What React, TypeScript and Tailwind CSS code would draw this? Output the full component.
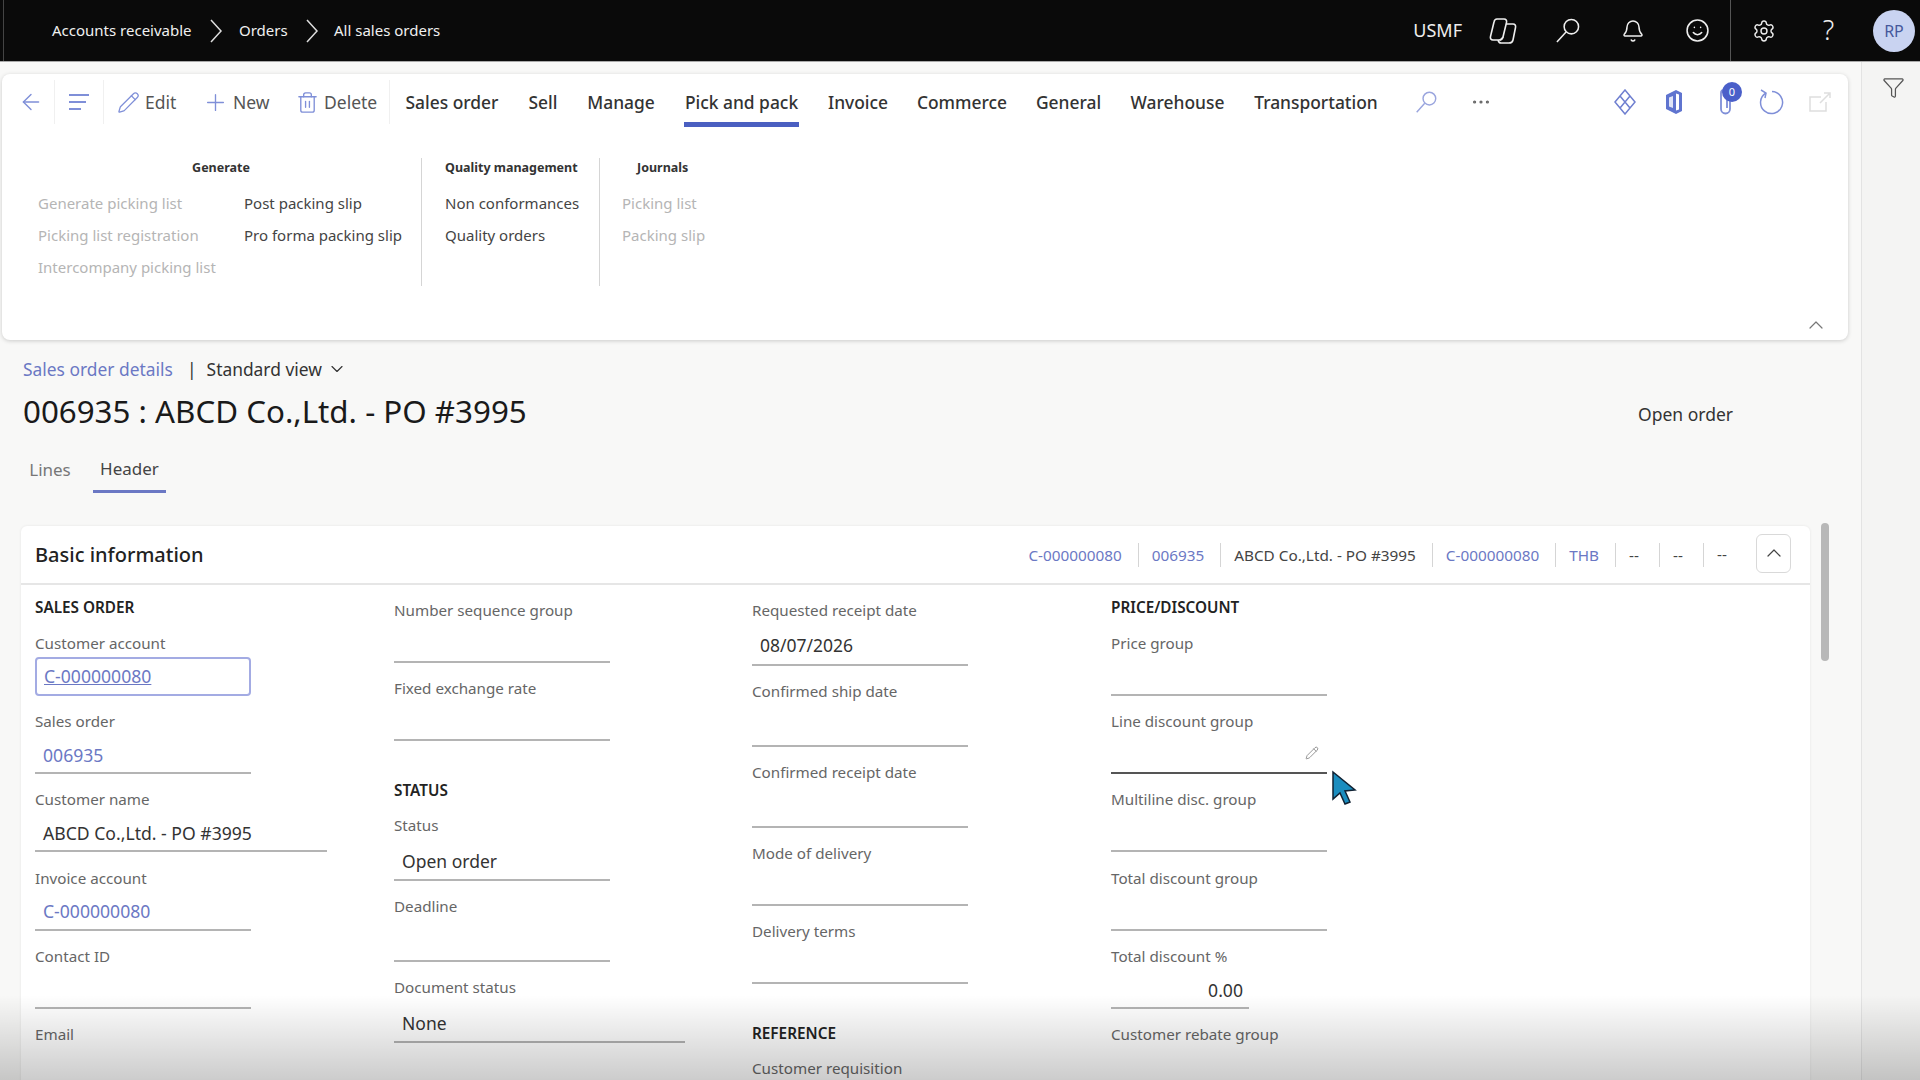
import { FC, ReactNode } from 'react';
import { ArrowLeft, Bell, ChevronDown, ChevronUp, Ellipsis, Funnel, Pencil, Plus, Settings, Smile, Trash2 } from 'lucide-react';

const font = "font-['Noto_Sans','Open_Sans',sans-serif]";

// ---- small drawn icons ----
const CopilotIcon = () => (
    <svg width="30" height="28" viewBox="0 0 30 28" fill="none" stroke="#eee" strokeWidth="1.600">
        <path d="M9 2h7c2 0 3 1.500 2.500 3.500L15 20c-.5 2-2 3-4 3H5c-2 0-3-1.500-2.500-3.500L6 5c.4-2 1.500-3 3-3z" />
        <path d="M18 7h7c2 0 3 1.500 2.500 3.500L25 23c-.4 2-2 3-4 3h-8c-1.500 0-2.500-1-3-3" />
        <path d="M12 23c1.500-.5 2.500-1.500 3-3" />
    </svg>
);

const LensIcon: FC<{ size: number; color: string; width?: number }> = ({ size, color, width }) => (
    <svg width={size} height={size} viewBox="0 0 26 26" fill="none" stroke={color} strokeWidth={width ?? 1.600}>
        <circle cx="17" cy="9" r="7.500" />
        <path d="M11.500 14.500L2 25" />
    </svg>
);

const DiamondIcon = () => (
    <svg width="22" height="26" viewBox="0 0 22 26" fill="none" stroke="#6f7fd0" strokeWidth="1.500">
        <path d="M11 1l10 12-10 12L1 13z" />
        <path d="M6 7l10 12M16 7L6 19" />
    </svg>
);

const OfficeIcon = () => (
    <svg width="18" height="26" viewBox="0 0 18 26">
        <path d="M1 6l10-5 6 3v18l-6 3-10-5z" fill="#5f74cf" />
        <path d="M11 4.500v17l3-1V5.500z" fill="#fff" />
        <path d="M4 8.500l4-1.500v12l-4-1.500z" fill="#dfe4f7" />
    </svg>
);

const ClipIcon = () => (
    <svg width="14" height="30" viewBox="0 0 14 30" fill="none" stroke="#7f8fd8" strokeWidth="1.800">
        <path d="M11 6v16a4.500 4.500 0 0 1-9 0V6a3 3 0 0 1 6 0v15" />
    </svg>
);

const RefreshIcon = () => (
    <svg width="26" height="28" viewBox="0 0 26 28" fill="none" stroke="#7f8fd8" strokeWidth="1.500">
        <path d="M8 5a11 11 0 1 0 6-1.500" />
        <path d="M3 2l5 3-1 5" />
    </svg>
);

const OpenIcon = () => (
    <svg width="24" height="22" viewBox="0 0 24 22" fill="none" stroke="#dedede" strokeWidth="1.500">
        <path d="M13 6H2v14h16v-9" />
        <path d="M12 12l9-9M16 2h6v5" />
    </svg>
);

const MenuLines = () => (
    <svg width="20" height="18" viewBox="0 0 20 18" stroke="#7f8fd8" strokeWidth="2">
        <path d="M0 2h20M0 9h17M0 16h12" />
    </svg>
);

const MouseCursor = () => (
    <svg width="26" height="36" viewBox="0 0 26 36" className="absolute left-[1331px] top-[770px]">
        <path d="M2 2l0 27 7-6 5 11 5-2-5-11 10-1z" fill="#1b8dbf" stroke="#123" strokeWidth="1.500" />
    </svg>
);

// ---- form parts ----
const Heading: FC<{ children: ReactNode; className?: string }> = ({ children, className }) => (
    <div className={`h-[18px] leading-[18px] text-[15.300px] font-semibold text-[#222] ${className ?? ''}`}>{children}</div>
);

const Label: FC<{ children: ReactNode }> = ({ children }) => (
    <div className="h-[18px] leading-[18px] text-[15.200px] text-[#666] whitespace-nowrap">{children}</div>
);

interface FieldProps {
    label: string;
    value?: string;
    link?: boolean;
    tall?: boolean;
    width?: string;
    right?: boolean;
    children?: ReactNode;
    lineColor?: string;
}

const Field: FC<FieldProps> = ({ label, value, link, tall, width, right, children, lineColor }) => (
    <div className={tall ? 'h-[81px]' : 'h-[78.200px]'}>
        <Label>{label}</Label>
        <div
            className={`flex items-center px-2 border-b-2 ${lineColor ?? 'border-[#b4b4b4]'} ${width ?? 'w-[216px]'} ${tall ? 'mt-[9px] h-[38px] text-[17.500px]' : 'mt-[8px] h-[36px] text-[17.600px]'} ${link ? 'text-[#6b78c4]' : 'text-[#333]'} ${right ? 'justify-end pr-[6px]' : ''}`}
        >
            {value}
            {children}
        </div>
    </div>
);

const ribbonTabs = [
    { name: 'Sales order', w: 'w-[94px]' },
    { name: 'Sell', w: 'w-[30px]' },
    { name: 'Manage', w: 'w-[68px]' },
    { name: 'Pick and pack', w: 'w-[115px]', active: true },
    { name: 'Invoice', w: 'w-[60px]' },
    { name: 'Commerce', w: 'w-[90px]' },
    { name: 'General', w: 'w-[65px]' },
    { name: 'Warehouse', w: 'w-[95px]' },
    { name: 'Transportation', w: 'w-[124px]' },
];

const summary = [
    { text: 'C-000000080', link: true },
    { text: '006935', link: true },
    { text: 'ABCD Co.,Ltd. - PO #3995' },
    { text: 'C-000000080', link: true },
    { text: 'THB', link: true },
    { text: '--', dash: true },
    { text: '--', dash: true },
];

const RibbonLink: FC<{ children: ReactNode; off?: boolean }> = ({ children, off }) => (
    <div className={`h-[32px] leading-[32px] text-[15px] whitespace-nowrap ${off ? 'text-[#b5b5b5]' : 'text-[#444]'}`}>{children}</div>
);

const GroupTitle: FC<{ children: ReactNode; className?: string }> = ({ children, className }) => (
    <div className={`h-[20px] leading-[20px] text-[12.500px] font-bold text-[#333] whitespace-nowrap ${className ?? ''}`}>{children}</div>
);

export default function App() {
    return (
        <div className={`relative w-[1920px] h-[1080px] overflow-hidden bg-[#f8f8f7] ${font}`}>
            {/* top bar */}
            <div className="flex items-center justify-between h-[62px] bg-[#0a0a0a] border-b border-[#a9a9a9] pr-[5px]">
                <div className="flex items-center h-full ml-[3px] border-l border-[#444] pl-[48px] text-[15px] text-[#f0f0f0]">
                    <span className="w-[140px] whitespace-nowrap">Accounts receivable</span>
                    <svg width="14" height="26" viewBox="0 0 14 26" fill="none" stroke="#ddd" strokeWidth="1.500" className="ml-[17px] mr-[16px]">
                        <path d="M2 2l10 11L2 24" />
                    </svg>
                    <span className="w-[49px]">Orders</span>
                    <svg width="14" height="26" viewBox="0 0 14 26" fill="none" stroke="#ddd" strokeWidth="1.500" className="ml-[17px] mr-[15px]">
                        <path d="M2 2l10 11L2 24" />
                    </svg>
                    <span className="whitespace-nowrap">All sales orders</span>
                </div>
                <div className="flex items-center h-full text-[#eee]">
                    <span className="text-[18px] mr-[8px]">USMF</span>
                    <div className="flex items-center justify-center w-[65px]"><CopilotIcon /></div>
                    <div className="flex items-center justify-center w-[65px]"><LensIcon size={25} color="#eee" /></div>
                    <div className="flex items-center justify-center w-[65px]"><Bell size={24} strokeWidth={1.500} /></div>
                    <div className="flex items-center justify-center w-[65px]"><Smile size={25} strokeWidth={1.500} /></div>
                    <div className="flex items-center h-full border-l border-[#555]">
                        <div className="flex items-center justify-center w-[65px]"><Settings size={24} strokeWidth={1.400} /></div>
                        <div className="flex items-center justify-center w-[65px] text-[27px] font-light">?</div>
                        <div className="flex items-center justify-center w-[42px] h-[42px] ml-[12px] rounded-full bg-[#c9d3f1] text-[#46589c] text-[16px]">RP</div>
                    </div>
                </div>
            </div>

            <div className="flex h-[1018px]">
                {/* main column */}
                <div className="w-[1861px] shrink-0">
                    {/* action pane */}
                    <div className="mt-[12px] ml-[2px] w-[1846px] h-[266px] bg-white rounded-lg shadow-[0_1px_4px_rgba(0,0,0,0.18)] relative">
                        <div className="flex items-center h-[53px]">
                            <div className="flex items-center justify-center w-[53px] h-[44px] mt-[3px] pl-[5px] border-r border-[#f0f0f0]">
                                <ArrowLeft size={26} strokeWidth={1.300} color="#7f8fd8" />
                            </div>
                            <div className="flex items-center justify-center w-[49px] h-[44px] mt-[3px] border-r border-[#f0f0f0]">
                                <MenuLines />
                            </div>
                            <div className="flex items-center h-[44px] mt-[3px] w-[286px] border-r border-[#f0f0f0] text-[17.500px] text-[#555] pl-[13px]">
                                <Pencil size={23} strokeWidth={1.300} color="#7f8fd8" />
                                <span className="ml-[5px] w-[57px]">Edit</span>
                                <Plus size={27} strokeWidth={1.200} color="#7f8fd8" />
                                <span className="ml-[4px] w-[63px]">New</span>
                                <Trash2 size={23} strokeWidth={1.400} color="#7f8fd8" />
                                <span className="ml-[5px]">Delete</span>
                            </div>
                            <div className="flex gap-[29px] ml-[15px]">
                                {ribbonTabs.map((tab) => (
                                    <div
                                        key={tab.name}
                                        className={`flex items-center justify-center h-[53px] pt-[8px] border-b-[5px] text-[17.400px] font-medium text-[#333] whitespace-nowrap ${tab.w} ${tab.active ? 'border-[#4a5fc1]' : 'border-transparent'}`}
                                    >
                                        {tab.name}
                                    </div>
                                ))}
                            </div>
                            <div className="flex items-center mt-[3px] ml-[37px]">
                                <LensIcon size={22} color="#9aa5de" width={1.700} />
                                <Ellipsis size={22} strokeWidth={1.500} color="#666" className="ml-[33px]" />
                            </div>
                            <div className="flex items-center mt-[3px] ml-[122px]">
                                <DiamondIcon />
                                <div className="ml-[29px]"><OfficeIcon /></div>
                                <div className="relative ml-[36px]">
                                    <ClipIcon />
                                    <div className="absolute -top-[5px] left-[3px] flex items-center justify-center w-[20px] h-[20px] rounded-full bg-[#4a5fc9] text-white text-[11px]">0</div>
                                </div>
                                <div className="ml-[25px]"><RefreshIcon /></div>
                                <div className="ml-[24px]"><OpenIcon /></div>
                            </div>
                        </div>

                        {/* ribbon groups */}
                        <div className="flex mt-[31px]">
                            <div className="w-[420px] h-[128px] border-r border-[#d5d5d5] pl-[36px]">
                                <GroupTitle className="text-center pr-[18px] w-[384px]">Generate</GroupTitle>
                                <div className="flex mt-[9px]">
                                    <div className="w-[206px]">
                                        <RibbonLink off>Generate picking list</RibbonLink>
                                        <RibbonLink off>Picking list registration</RibbonLink>
                                        <RibbonLink off>Intercompany picking list</RibbonLink>
                                    </div>
                                    <div>
                                        <RibbonLink>Post packing slip</RibbonLink>
                                        <RibbonLink>Pro forma packing slip</RibbonLink>
                                    </div>
                                </div>
                            </div>
                            <div className="w-[178px] h-[128px] border-r border-[#d5d5d5] pl-[23px]">
                                <GroupTitle>Quality management</GroupTitle>
                                <div className="mt-[9px]">
                                    <RibbonLink>Non conformances</RibbonLink>
                                    <RibbonLink>Quality orders</RibbonLink>
                                </div>
                            </div>
                            <div className="pl-[22px]">
                                <GroupTitle className="pl-[15px]">Journals</GroupTitle>
                                <div className="mt-[9px]">
                                    <RibbonLink off>Picking list</RibbonLink>
                                    <RibbonLink off>Packing slip</RibbonLink>
                                </div>
                            </div>
                        </div>
                        <ChevronUp size={24} strokeWidth={1.200} color="#777" className="absolute right-[20px] bottom-[3px]" />
                    </div>

                    {/* page header */}
                    <div className="ml-[23px] w-[1710px]">
                        <div className="flex items-center mt-[17px] h-[24px] text-[17.400px] text-[#333]">
                            <span className="w-[149px] whitespace-nowrap text-[#6b78c4]">Sales order details</span>
                            <span className="ml-[15px]">|</span>
                            <span className="ml-[10px] whitespace-nowrap">Standard view</span>
                            <ChevronDown size={20} strokeWidth={1.400} className="ml-[5px]" />
                        </div>
                        <div className="flex items-center justify-between mt-[8px] h-[44px]">
                            <span className="text-[31.300px] text-[#1a1a1a] whitespace-nowrap">006935 : ABCD Co.,Ltd. - PO #3995</span>
                            <span className="text-[17.500px] text-[#333] mt-[6px]">Open order</span>
                        </div>
                        <div className="flex mt-[16px] h-[44px] text-[17px]">
                            <div className="flex items-center justify-center w-[42px] ml-[6px] h-[42px] text-[#777]">Lines</div>
                            <div className="flex items-center justify-center w-[73px] ml-[22px] h-[44px] pb-[2px] border-b-[3px] border-[#6b78c4] text-[#444]">Header</div>
                        </div>
                    </div>

                    {/* basic information card */}
                    <div className="flex mt-[33px] ml-[21px]">
                        <div className="w-[1789px] h-[560px] bg-white rounded-t-md shadow-[0_0_3px_rgba(0,0,0,0.08)]">
                            <div className="flex items-center justify-between h-[59px] pl-[14px] pr-[19px] border-b-2 border-[#e6e6e6]">
                                <span className="text-[20px] font-medium text-[#222]">Basic information</span>
                                <div className="flex items-center text-[15.300px]">
                                    {summary.map((item, i) => (
                                        <span
                                            key={i}
                                            className={`h-[24px] leading-[24px] pr-[16px] mr-[13px] border-r border-[#d5d5d5] whitespace-nowrap ${item.link ? 'text-[#6b78c4]' : 'text-[#444]'}`}
                                        >
                                            <span className={item.dash ? 'inline-block w-[14px]' : ''}>{item.text}</span>
                                        </span>
                                    ))}
                                    <span className="text-[#444] w-[14px]">--</span>
                                    <div className="flex items-center justify-center w-[35px] h-[39px] ml-[25px] -mt-[3px] border border-[#d9d9d9] rounded-md">
                                        <ChevronUp size={24} strokeWidth={1.200} color="#444" />
                                    </div>
                                </div>
                            </div>
                            <div className="grid grid-cols-[359px_358px_359px_1fr] pl-[14px]">
                                <div className="pt-[13px]">
                                    <Heading className="mb-[18px]">SALES ORDER</Heading>
                                    <div className="h-[78.200px]">
                                        <Label>Customer account</Label>
                                        <div className="flex items-center w-[216px] h-[39px] mt-[5px] px-[7px] border-2 border-[#a3abe3] rounded text-[17.600px] text-[#6b78c4] underline">
                                            C-000000080
                                        </div>
                                    </div>
                                    <Field label="Sales order" value="006935" link />
                                    <Field label="Customer name" value="ABCD Co.,Ltd. - PO #3995" width="w-[292px]" />
                                    <Field label="Invoice account" value="C-000000080" link />
                                    <Field label="Contact ID" />
                                    <Label>Email</Label>
                                </div>
                                <div className="pt-[16px]">
                                    <Field label="Number sequence group" />
                                    <Field label="Fixed exchange rate" />
                                    <Heading className="mt-[24px] mb-[17px]">STATUS</Heading>
                                    <Field label="Status" value="Open order" tall />
                                    <Field label="Deadline" tall />
                                    <Field label="Document status" value="None" tall width="w-[291px]" />
                                </div>
                                <div className="pt-[15.500px]">
                                    <Field label="Requested receipt date" value="08/07/2026" tall />
                                    <Field label="Confirmed ship date" tall />
                                    <Field label="Confirmed receipt date" tall />
                                    <Field label="Mode of delivery" />
                                    <Field label="Delivery terms" />
                                    <Heading className="mt-[24px] mb-[17px]">REFERENCE</Heading>
                                    <Label>Customer requisition</Label>
                                </div>
                                <div className="pt-[13px]">
                                    <Heading className="mb-[18px]">PRICE/DISCOUNT</Heading>
                                    <Field label="Price group" />
                                    <Field label="Line discount group" lineColor="border-[#555]">
                                        <Pencil size={14} strokeWidth={1.300} color="#777" className="ml-auto -mt-[4px] mr-[0px]" />
                                    </Field>
                                    <Field label="Multiline disc. group" />
                                    <Field label="Total discount group" />
                                    <Field label="Total discount %" value="0.00" width="w-[138px]" right />
                                    <Label>Customer rebate group</Label>
                                </div>
                            </div>
                        </div>
                        <div className="w-[8px] h-[138px] ml-[11px] -mt-[3px] rounded bg-[#b8b8b8]" />
                    </div>
                </div>

                {/* right rail */}
                <div className="flex-1 flex justify-center pt-[14px] pl-[4px] border-l border-[#e3e3e3] bg-[#f4f4f3]">
                    <Funnel size={23} strokeWidth={1.300} color="#555" />
                </div>
            </div>

            <MouseCursor />
            {/* player shade along the bottom edge */}
            <div className="absolute left-0 right-0 bottom-0 h-[85px] bg-linear-to-b from-transparent to-black/20 pointer-events-none" />
        </div>
    );
}
